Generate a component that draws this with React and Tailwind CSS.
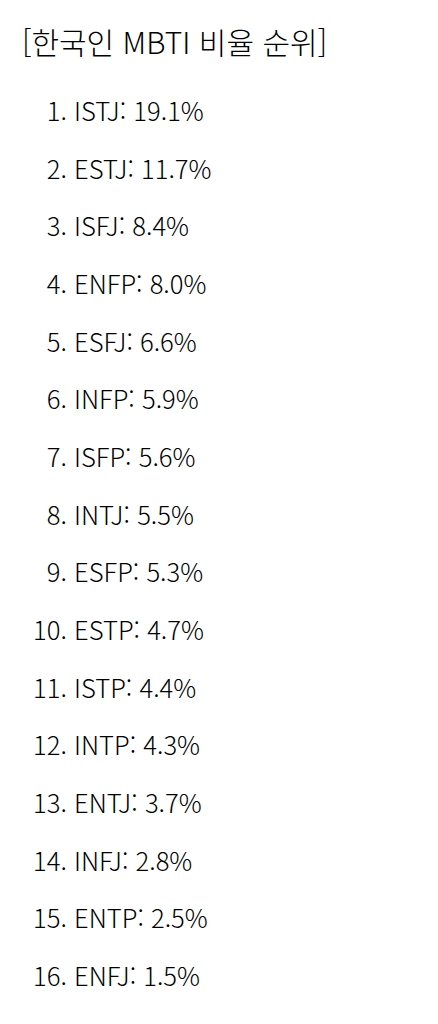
const items = [
  ["ISTJ", "19.1%"],
  ["ESTJ", "11.7%"],
  ["ISFJ", "8.4%"],
  ["ENFP", "8.0%"],
  ["ESFJ", "6.6%"],
  ["INFP", "5.9%"],
  ["ISFP", "5.6%"],
  ["INTJ", "5.5%"],
  ["ESFP", "5.3%"],
  ["ESTP", "4.7%"],
  ["ISTP", "4.4%"],
  ["INTP", "4.3%"],
  ["ENTJ", "3.7%"],
  ["INFJ", "2.8%"],
  ["ENTP", "2.5%"],
  ["ENFJ", "1.5%"],
];

export default function App() {
  return (
    <div
      lang="ko"
      className="min-h-screen bg-white px-[22px] pt-[20px] text-black font-light font-['Noto_Sans_CJK_KR','Noto_Sans',sans-serif]"
    >
      <p className="text-[30px] leading-[42px]">[한국인 MBTI 비율 순위]</p>
      <ol className="mt-[19px] list-decimal pl-[52px] text-[25.6px] leading-[57.67px]">
        {items.map(([type, pct]) => (
          <li key={type}>
            {type}: {pct}
          </li>
        ))}
      </ol>
    </div>
  );
}
